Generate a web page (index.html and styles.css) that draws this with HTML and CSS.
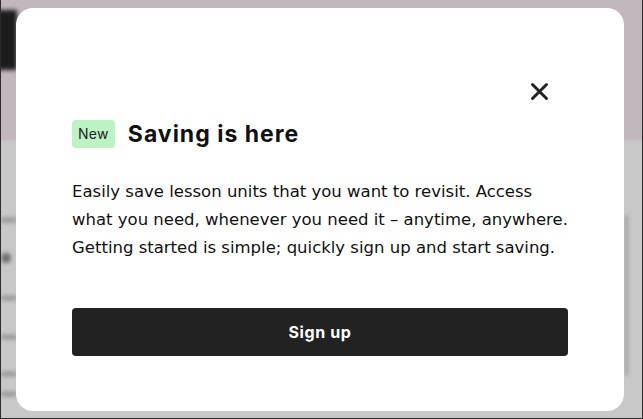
FILE: index.html
```html
<!DOCTYPE html>
<html lang="en">

<head>
    <meta charset="UTF-8">
    <meta name="viewport" content="width=device-width, initial-scale=1.0">
    <title>Saving is here</title>
    <link rel="stylesheet" href="styles.css">
</head>

<body>
    <div class="page">
        <!-- blurred page behind the dialog -->
        <div class="backdrop">
            <div class="blur header-blob"></div>
            <div class="blur line" style="top: 218px;"></div>
            <div class="blur dot" style="top: 253px;"></div>
            <div class="blur line" style="top: 296px;"></div>
            <div class="blur line" style="top: 335px;"></div>
            <div class="blur line" style="top: 372px;"></div>
            <div class="blur line" style="top: 392px;"></div>
            <div class="blur edge"></div>
        </div>

        <div class="modal">
            <div class="modal-top">
                <button class="close-btn" aria-label="Close">
                    <svg width="19" height="19" viewBox="0 0 19 19">
                        <path d="M2.5 2.5 L16.5 16.5 M16.5 2.5 L2.5 16.5" stroke="#222" stroke-width="3" stroke-linecap="round" fill="none" />
                    </svg>
                </button>
            </div>
            <div class="modal-title">
                <span class="badge">New</span>
                <h2>Saving is here</h2>
            </div>
            <p class="modal-text">
                Easily save lesson units that you want to revisit. Access what you need, whenever you need it – anytime, anywhere. Getting started is simple; quickly sign up and start saving.
            </p>
            <button class="signup-btn">Sign up</button>
        </div>
    </div>
</body>

</html>
```

FILE: styles.css
```css
/* Reset */
* {
    margin: 0;
    padding: 0;
    box-sizing: border-box;
    font-family: Inter, "Open Sans", sans-serif;
}

body {
    background-color: #c8c8c8;
    color: #111;
}

.page {
    position: relative;
    height: 419px;
    border: 1px solid #2b2b2b;
    border-top: none;
    background: linear-gradient(#c1b7bc 0, #c1b7bc 138px, #c8c8c8 142px);
    padding: 8px 18px 7px 15px;
    overflow: hidden;
}

.backdrop {
    position: absolute;
    inset: 0;
}

.blur {
    position: absolute;
    filter: blur(2px);
}

.header-blob {
    left: -6px;
    top: 10px;
    width: 22px;
    height: 60px;
    background-color: #1c1c1c;
}

.line {
    left: 0;
    width: 16px;
    height: 4px;
    background-color: #8e8e8e;
}

.dot {
    left: 0;
    width: 10px;
    height: 10px;
    background-color: #6a6a6a;
    border-radius: 50%;
}

.edge {
    left: 624px;
    top: 215px;
    width: 3px;
    height: 160px;
    background-color: #9a9a9a;
}

.modal {
    position: relative;
    height: 100%;
    background-color: #fff;
    border-radius: 17px;
    padding: 74px 56px 56px;
}

.modal-top {
    display: flex;
    justify-content: flex-end;
    padding-right: 19px;
}

.close-btn {
    background: none;
    border: none;
    width: 19px;
    height: 19px;
    cursor: pointer;
    display: flex;
}

.modal-title {
    display: flex;
    align-items: center;
    gap: 13px;
    margin-top: 19px;
}

.badge {
    background-color: #bdf2c4;
    color: #222;
    font-size: 14px;
    line-height: 28px;
    padding: 0 6px;
    border-radius: 4px;
    letter-spacing: 0.3px;
}

.modal-title h2 {
    font-size: 23px;
    font-weight: 700;
    color: #111;
    letter-spacing: 1px;
}

.modal-text {
    margin-top: 30px;
    margin-right: -6px;
    font-family: "DejaVu Sans", sans-serif;
    font-size: 16.5px;
    line-height: 28px;
    color: #111;
}

.signup-btn {
    display: block;
    width: 100%;
    height: 48px;
    margin-top: 46px;
    background-color: #222;
    color: #fff;
    border: none;
    border-radius: 4px;
    font-size: 16px;
    font-weight: 700;
    letter-spacing: 0.6px;
    cursor: pointer;
}
```
